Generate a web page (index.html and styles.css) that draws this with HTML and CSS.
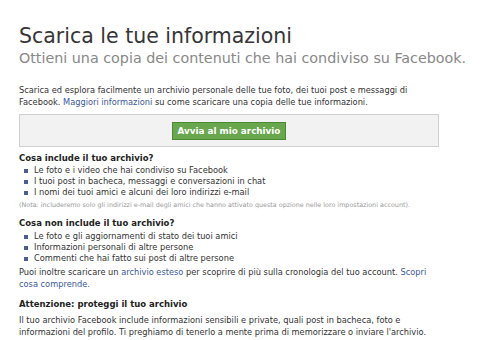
FILE: index.html
```html
<!DOCTYPE html>
<html lang="it">
<head>
    <meta charset="UTF-8">
    <title>Scarica le tue informazioni</title>
    <link rel="stylesheet" href="styles.css">
</head>
<body>
    <main class="pagina">
        <header class="intestazione">
            <h1>Scarica le tue informazioni</h1>
            <p>Ottieni una copia dei contenuti che hai condiviso su Facebook.</p>
        </header>

        <p class="testo">Scarica ed esplora facilmente un archivio personale delle tue foto, dei tuoi post e messaggi di Facebook. <a href="#">Maggiori informazioni</a> su come scaricare una copia delle tue informazioni.</p>

        <div class="riquadro">
            <button class="bottone">Avvia al mio archivio</button>
        </div>

        <section class="blocco">
            <h2>Cosa include il tuo archivio?</h2>
            <ul>
                <li>Le foto e i video che hai condiviso su Facebook</li>
                <li>I tuoi post in bacheca, messaggi e conversazioni in chat</li>
                <li>I nomi dei tuoi amici e alcuni dei loro indirizzi e-mail</li>
            </ul>
            <p class="nota">(Nota: includeremo solo gli indirizzi e-mail degli amici che hanno attivato questa opzione nelle loro impostazioni account).</p>
        </section>

        <section class="blocco secondo">
            <h2>Cosa non include il tuo archivio?</h2>
            <ul>
                <li>Le foto e gli aggiornamenti di stato dei tuoi amici</li>
                <li>Informazioni personali di altre persone</li>
                <li>Commenti che hai fatto sui post di altre persone</li>
            </ul>
        </section>

        <p class="testo esteso">Puoi inoltre scaricare un <a href="#">archivio esteso</a> per scoprire di più sulla cronologia del tuo account. <a href="#">Scopri cosa comprende.</a></p>

        <section class="blocco attenzione">
            <h2>Attenzione: proteggi il tuo archivio</h2>
            <p class="testo">Il tuo archivio Facebook include informazioni sensibili e private, quali post in bacheca, foto e informazioni del profilo. Ti preghiamo di tenerlo a mente prima di memorizzare o inviare l'archivio.</p>
        </section>
    </main>
</body>
</html>
```

FILE: styles.css
```css
/* Stile generale */
body {
    font-family: 'DejaVu Sans', Verdana, sans-serif;
    margin: 0;
    padding: 0;
    background-color: #fff;
    color: #333;
}

.pagina {
    width: 420px;
    padding: 24px 0 0 19px;
}

.intestazione h1 {
    margin: 0;
    font-size: 20.5px;
    font-weight: normal;
    color: #363636;
    line-height: 24px;
}

.intestazione p {
    margin: 2px 0 17px;
    font-size: 14.3px;
    line-height: 17px;
    color: #888;
    white-space: nowrap;
}

.testo {
    margin: 0;
    font-size: 8.25px;
    line-height: 12px;
    color: #333;
}

a {
    color: #3b5998;
    text-decoration: none;
}

.riquadro {
    margin: 6px 0 0;
    background-color: #f2f2f2;
    border: 1px solid #d0d0d0;
    padding: 7px 0 6px;
    display: flex;
    justify-content: center;
}

.bottone {
    font-family: inherit;
    font-size: 8.8px;
    font-weight: bold;
    color: #fff;
    background-color: #69a74e;
    border: 1px solid #4a8a32;
    padding: 3px 5px;
    line-height: 10px;
}

.blocco {
    margin-top: 5px;
}

.blocco h2 {
    margin: 0;
    font-size: 8.5px;
    line-height: 13px;
    color: #222;
}

.blocco ul {
    margin: 0;
    padding: 0 0 0 5px;
    list-style: none;
}

.blocco ul li {
    font-size: 8.25px;
    line-height: 11px;
    padding-left: 10px;
    position: relative;
}

.blocco ul li::before {
    content: "";
    position: absolute;
    left: 0;
    top: 4px;
    width: 4px;
    height: 4px;
    background-color: #4b5f8e;
}

.nota {
    margin: 2px 0 0;
    font-size: 6.4px;
    line-height: 10px;
    color: #999;
}

.secondo {
    margin-top: 7px;
}

.secondo h2 {
    margin-bottom: 1px;
}

.esteso {
    margin-top: 2px;
}

.attenzione {
    margin-top: 8px;
}

.attenzione h2 {
    margin-bottom: 3px;
}
```
